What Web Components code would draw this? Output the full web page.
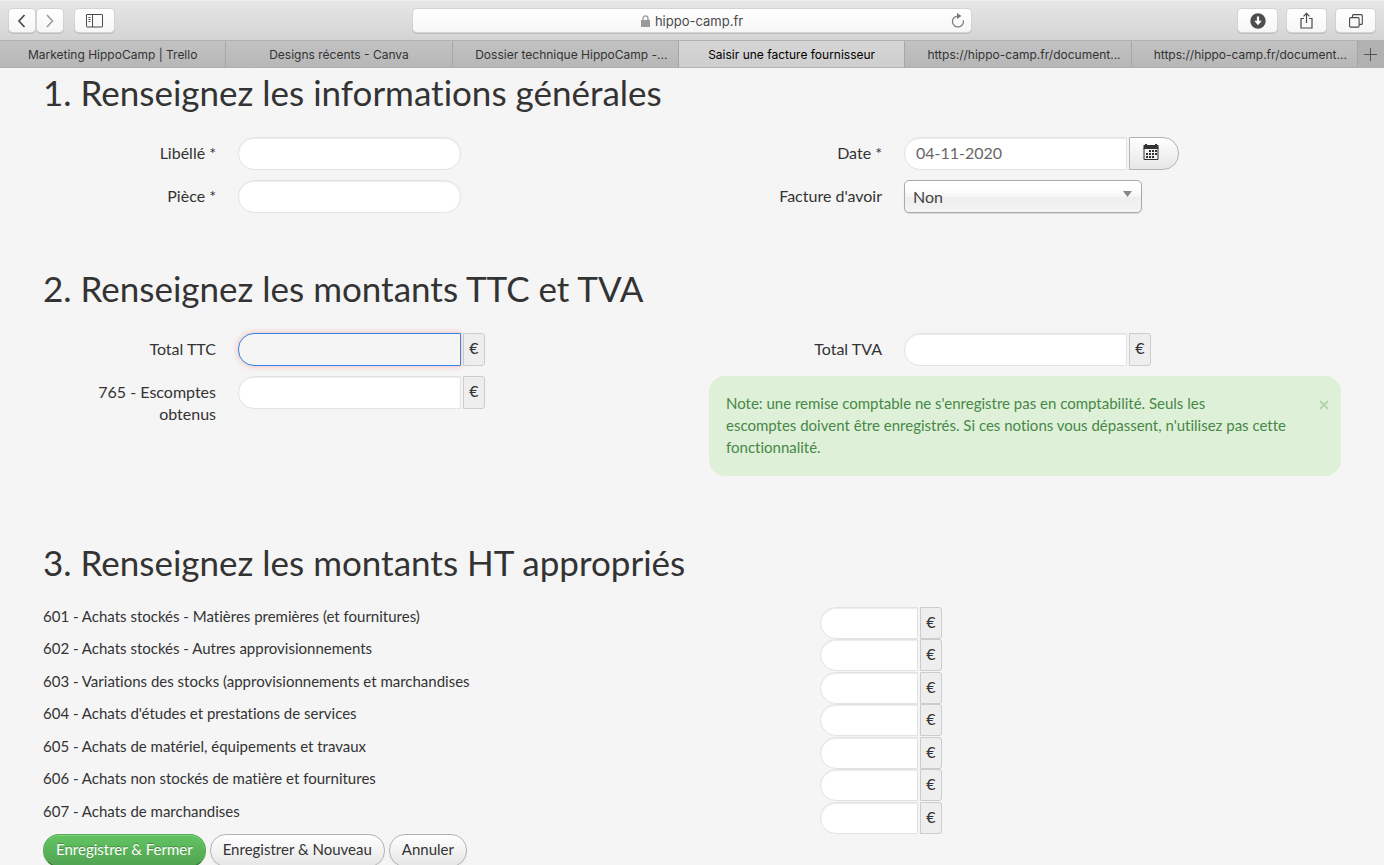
<!DOCTYPE html>
<html lang="fr">
<head>
<meta charset="utf-8">
<title>Saisir une facture fournisseur</title>
<style>
  html, body { height: 100%; margin: 0; }
  body {
    display: flex;
    flex-direction: column;
    overflow: hidden;
    background: #f5f5f5;
    color: #333;
    font: 16px/22px Lato, "Open Sans", sans-serif;
    font-variant-ligatures: none;
  }
  main {
    flex: 1;
    min-height: 0;
    overflow: hidden;
    padding: 0 43px;
  }
  form { margin: 0; }
</style>
</head>
<body>
<browser-toolbar></browser-toolbar>
<tab-strip>
  <browser-tab>Marketing HippoCamp | Trello</browser-tab>
  <browser-tab>Designs récents - Canva</browser-tab>
  <browser-tab long>Dossier technique HippoCamp -...</browser-tab>
  <browser-tab current>Saisir une facture fournisseur</browser-tab>
  <browser-tab long>https://hippo-camp.fr/document...</browser-tab>
  <browser-tab long>https://hippo-camp.fr/document...</browser-tab>
</tab-strip>
<main>
  <form>
    <form-section heading="1. Renseignez les informations générales">
      <form-columns>
        <text-field slot="left" label="Libéllé *"></text-field>
        <text-field slot="left" label="Pièce *"></text-field>
        <date-field slot="right" label="Date *" value="04-11-2020"></date-field>
        <select-field slot="right" label="Facture d'avoir" options="Non,Oui"></select-field>
      </form-columns>
    </form-section>
    <form-section heading="2. Renseignez les montants TTC et TVA">
      <form-columns>
        <text-field slot="left" label="Total TTC" unit="€" active></text-field>
        <text-field slot="left" label="765 - Escomptes obtenus" unit="€"></text-field>
        <text-field slot="right" label="Total TVA" unit="€"></text-field>
        <note-box slot="right">Note: une remise comptable ne s'enregistre pas en comptabilité. Seuls les escomptes doivent être enregistrés. Si ces notions vous dépassent, n'utilisez pas cette fonctionnalité.</note-box>
      </form-columns>
    </form-section>
    <form-section heading="3. Renseignez les montants HT appropriés">
      <amount-list>
        <amount-row label="601 - Achats stockés - Matières premières (et fournitures)"></amount-row>
        <amount-row label="602 - Achats stockés - Autres approvisionnements"></amount-row>
        <amount-row label="603 - Variations des stocks (approvisionnements et marchandises"></amount-row>
        <amount-row label="604 - Achats d'études et prestations de services"></amount-row>
        <amount-row label="605 - Achats de matériel, équipements et travaux"></amount-row>
        <amount-row label="606 - Achats non stockés de matière et fournitures"></amount-row>
        <amount-row label="607 - Achats de marchandises"></amount-row>
      </amount-list>
      <action-bar>
        <action-button primary>Enregistrer &amp; Fermer</action-button>
        <action-button>Enregistrer &amp; Nouveau</action-button>
        <action-button>Annuler</action-button>
      </action-bar>
    </form-section>
  </form>
</main>

<script>
const define = (name, render) => customElements.define(name, class extends HTMLElement {
  connectedCallback() {
    if (!this.shadowRoot) this.attachShadow({ mode: 'open' }).innerHTML = render(this);
  }
});

const controlStyles = `
  * { box-sizing: border-box; }
  input {
    height: 33px; min-width: 0; margin: 0; padding: 3px 11px 5px;
    border: 1px solid #e3e3e3; border-radius: 16px; background: #fff;
    box-shadow: inset 0 1px 1px rgba(0,0,0,.08);
    color: #666; font: inherit; outline: 0;
  }
  .joined { border-radius: 16px 0 0 16px; }
  .unit {
    width: 22px; height: 33px; flex: none; padding-top: 3px; text-align: center;
    border: 1px solid #ccc; border-radius: 0 3px 3px 0; background: #eee;
  }`;

const fieldStyles = controlStyles + `
  :host { display: flex; align-items: flex-start; gap: 22px; }
  label { width: 173px; flex: none; padding-top: 5px; text-align: right; }
  .control { display: flex; gap: 2px; }
  input { width: 223px; }`;

define('browser-toolbar', () => `
  <style>
    :host {
      display: grid; grid-template-columns: 1fr 558px 1fr; align-items: center; flex: none;
      box-sizing: border-box; height: 41px; padding: 0 9px; color: #4a4a4a;
      border-top: 1px solid #eee; border-bottom: 1px solid #b0b0b0;
      background: linear-gradient(#e6e6e6, #d4d4d4);
      font: 13px/16px Inter, sans-serif;
    }
    div { display: flex; }
    .end { justify-content: flex-end; gap: 10px; }
    button {
      display: grid; place-items: center; box-sizing: border-box; width: 39px; height: 23px; padding: 0;
      border: 0; border-radius: 4px; background: linear-gradient(#fff, #f6f6f6);
      box-shadow: 0 0 0 1px #d3d3d3, 0 1px 0 1px #bdbdbd; color: inherit;
    }
    .nav { width: 26px; margin-right: 2px; }
    .side { margin-left: 10px; }
    .address {
      position: relative; justify-content: center; align-items: center; gap: 5px; height: 23px;
      border-radius: 4px; background: linear-gradient(#fff, #f6f6f6);
      box-shadow: 0 0 0 1px #d3d3d3, 0 1px 0 1px #bdbdbd;
    }
    .reload { position: absolute; right: 0; width: 27px; background: none; box-shadow: none; }
    svg { display: block; fill: none; stroke: currentColor; }
  </style>
  <div>
    <button class="nav" aria-label="Précédent"><svg width="10" height="14" stroke-width="1.7"><path d="M7.5 1 2 7l5.500 6"/></svg></button>
    <button class="nav" aria-label="Suivant"><svg width="10" height="14" stroke-width="1.5" style="color:#999"><path d="m2 1 5.500 6L2 13"/></svg></button>
    <button class="side" aria-label="Barre latérale"><svg width="17" height="14"><rect x=".5" y=".5" width="16" height="12.500" rx=".5"/><path d="M6.500 1v12M2.500 3.500h2M2.500 5.500h2M2.500 7.500h2" /></svg></button>
  </div>
  <div class="address">
    <svg width="9" height="12" style="color:#999"><rect x=".5" y="5.500" width="8" height="6" fill="currentColor"/><path d="M2 6V3.500a2.500 2.700 0 0 1 5 0V6" stroke-width="1.300"/></svg>
    <span>hippo-camp.fr</span>
    <button class="reload" aria-label="Recharger"><svg width="13" height="15" style="color:#777"><path d="M7 3a5.500 5.500 0 1 0 5.300 4.300" stroke-width="1.200"/><path d="M6 0l4.500 3L6 6z" fill="currentColor" stroke="none"/></svg></button>
  </div>
  <div class="end">
    <button aria-label="Téléchargements"><svg width="16" height="16"><circle cx="8" cy="8" r="7.700" fill="#4d4d4d" stroke="none"/><path d="M8 3.500v5" stroke="#fff" stroke-width="2.200"/><path d="M4.200 7.800h7.600L8 12.200z" fill="#fff" stroke="none"/></svg></button>
    <button aria-label="Partager"><svg width="13" height="17" stroke-width="1.200"><path d="M4 6.500H1V16h11V6.500H9M6.500 11V1.500M3.500 4.300l3-3 3 3"/></svg></button>
    <button aria-label="Onglets"><svg width="14" height="14" stroke-width="1.100"><rect x=".6" y="3.600" width="9.500" height="9.500" rx="1"/><path d="M3.500 3.500V1.600a1 1 0 0 1 1-1h7.800a1 1 0 0 1 1 1v7.800a1 1 0 0 1-1 1h-2"/></svg></button>
  </div>`);

define('tab-strip', () => `
  <style>
    :host {
      display: flex; flex: none; box-sizing: border-box; height: 27px;
      border-bottom: 1px solid #b0b0b0; background: linear-gradient(#c2c2c2, #b7b7b7);
    }
    button { width: 26px; flex: none; display: grid; place-items: center; padding: 0; border: 0; background: #b1b1b1; color: #555; }
  </style>
  <slot></slot>
  <button aria-label="Nouvel onglet"><svg width="13" height="13" stroke="currentColor"><path d="M6.500 0v13M0 6.500h13"/></svg></button>`);

define('browser-tab', () => `
  <style>
    :host {
      flex: 1 1 0; min-width: 0; box-sizing: border-box; border-right: 1px solid #a6a6a6;
      font: 12px/27px Inter, sans-serif; text-align: center;
    }
    :host([current]) { background: linear-gradient(#d6d6d6, #cecece); }
    a { display: block; height: 26px; color: #333; text-decoration: none; white-space: nowrap; }
    :host([long]) a { padding-left: 12px; }
    :host([current]) a { color: #000; }
  </style>
  <a href="#"><slot></slot></a>`);

define('form-section', el => `
  <style>
    :host { display: block; margin-bottom: 51px; }
    h1 { margin: 0 0 21px; font-weight: 400; font-size: 35px; line-height: 48px; }
  </style>
  <h1>${el.getAttribute('heading')}</h1>
  <slot></slot>`);

define('form-columns', () => `
  <style>
    :host { display: grid; grid-template-columns: 1fr 1fr; gap: 34px; }
    div { display: flex; flex-direction: column; gap: 10px; }
  </style>
  <div><slot name="left"></slot></div>
  <div><slot name="right"></slot></div>`);

define('text-field', el => `
  <style>${fieldStyles}
    :host([active]) input {
      background: #f5f5f5; border-color: #2f86e8;
      box-shadow: 0 0 6px rgba(255, 60, 50, .35);
    }
  </style>
  <label for="box">${el.getAttribute('label')}</label>
  <div class="control">
    <input id="box" type="text" class="${el.hasAttribute('unit') ? 'joined' : ''}">
    ${el.hasAttribute('unit') ? `<span class="unit">${el.getAttribute('unit')}</span>` : ''}
  </div>`);

define('date-field', el => `
  <style>${fieldStyles}
    button {
      display: grid; place-items: center; width: 50px; height: 33px; padding: 0 6px 4px 0;
      border: 1px solid #b3b3b3; border-radius: 0 16px 16px 0; color: #333;
      background: linear-gradient(#fff, #e6e6e6);
    }
  </style>
  <label for="box">${el.getAttribute('label')}</label>
  <div class="control">
    <input id="box" type="text" class="joined" value="${el.getAttribute('value')}">
    <button type="button" aria-label="Choisir une date">
      <svg width="16" height="16" fill="currentColor">
        <path d="M.5 1H2V0h2v1h8V0h2v1h1.500v4H.5z"/>
        <path d="M1 4v11.500h14V4" fill="none" stroke="currentColor"/>
        <path d="M6 6h2v2H6zM9 6h2v2H9zM12 6h2v2h-2zM3 9h2v2H3zM6 9h2v2H6zM9 9h2v2H9zM12 9h2v2h-2zM3 12h2v2H3zM6 12h2v2H6zM9 12h2v2H9z"/>
      </svg>
    </button>
  </div>`);

define('select-field', el => `
  <style>${fieldStyles}
    .control { position: relative; }
    select {
      appearance: none; width: 238px; height: 33px; padding: 0 8px; color: #444; font: inherit;
      border: 1px solid #aaa; border-radius: 5px; box-shadow: 0 1px 1px rgba(0,0,0,.12);
      background: linear-gradient(#fff 20%, #f6f6f6 50%, #eee 52%, #f4f4f4);
    }
    svg { position: absolute; right: 10px; top: 11px; pointer-events: none; }
  </style>
  <label for="box">${el.getAttribute('label')}</label>
  <div class="control">
    <select id="box">${el.getAttribute('options').split(',').map(o => `<option>${o}</option>`).join('')}</select>
    <svg width="9" height="6" fill="#888"><path d="M0 0h9L4.500 6z"/></svg>
  </div>`);

define('note-box', () => `
  <style>
    :host {
      display: block; margin-bottom: 11px; padding: 16px 17px 18px; border-radius: 16px;
      background: #dff0d8; color: #468847; font-size: 15px;
    }
    button {
      float: right; width: 16px; height: 22px; margin: 0 -8px 0 60px; padding: 4px 0 0; border: 0;
      background: none; color: #b2d6ad;
    }
    p { margin: 0; }
    svg { display: block; margin: auto; }
  </style>
  <button type="button" aria-label="Fermer"><svg width="10" height="10" stroke="currentColor" stroke-width="2"><path d="m1 1 8 8M9 1 1 9"/></svg></button>
  <p><slot></slot></p>`);

define('amount-list', () => `
  <style>
    :host { display: grid; grid-auto-rows: 1fr; min-height: 227px; }
  </style>
  <slot></slot>`);

define('amount-row', el => `
  <style>${controlStyles}
    :host { display: flex; height: 32px; }
    label { width: 777px; flex: none; font-size: 15px; line-height: 18px; }
    input { width: 98px; height: 32px; margin-right: 2px; }
    .unit { height: 32px; }
  </style>
  <label for="box">${el.getAttribute('label')}</label>
  <input id="box" type="text" class="joined">
  <span class="unit">€</span>`);

define('action-bar', () => `
  <style>:host { display: flex; gap: 4px; }</style>
  <slot></slot>`);

define('action-button', () => `
  <style>
    button {
      box-sizing: border-box; height: 33px; padding: 0 12px 3px; border: 1px solid #b3b3b3; border-radius: 16px;
      background: linear-gradient(#fff, #e6e6e6); color: #333; font: inherit; font-size: 15px;
      box-shadow: inset 0 1px 0 rgba(255,255,255,.2), 0 1px 2px rgba(0,0,0,.05);
    }
    :host([primary]) button {
      border-color: #54ad54 #54ad54 #387038; background: linear-gradient(#62c462, #51a351);
      color: #fff; text-shadow: 0 -1px 0 rgba(0,0,0,.25);
    }
  </style>
  <button type="button"><slot></slot></button>`);
</script>
</body>
</html>
